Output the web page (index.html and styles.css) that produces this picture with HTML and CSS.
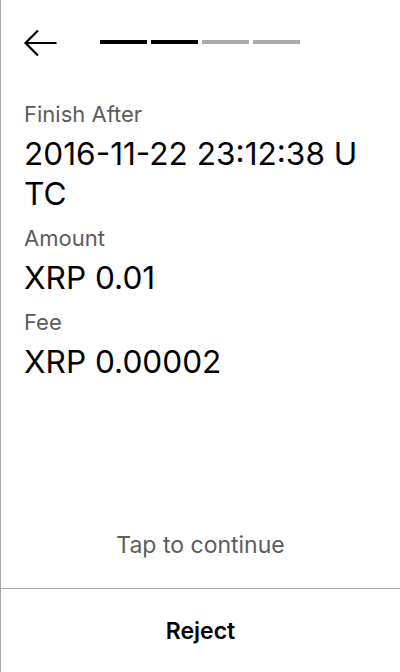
FILE: index.html
```html
<!DOCTYPE html>
<html>
<head>
<meta charset="utf-8">
<link rel="stylesheet" href="styles.css">
</head>
<body>
<div class="screen">
  <header class="header">
    <svg class="back" width="36" height="28" viewBox="0 0 36 28">
      <path d="M34.5 14 H3.5 M16 1.5 L3.5 14 L16 26.5" fill="none" stroke="#000" stroke-width="2.2"/>
    </svg>
    <div class="progress">
      <span class="seg on"></span><span class="seg on"></span><span class="seg"></span><span class="seg"></span>
    </div>
  </header>
  <main class="content">
    <div class="field">
      <div class="label">Finish After</div>
      <div class="value">2016-11-22 23:12:38 UTC</div>
    </div>
    <div class="field">
      <div class="label">Amount</div>
      <div class="value">XRP 0.01</div>
    </div>
    <div class="field">
      <div class="label">Fee</div>
      <div class="value">XRP 0.00002</div>
    </div>
  </main>
  <div class="tap">Tap to continue</div>
  <footer class="footer">
    <div class="reject">Reject</div>
  </footer>
</div>
</body>
</html>
```
FILE: styles.css
```css
html, body {
  margin: 0;
  padding: 0;
  background: #fff;
}
body {
  font-family: Inter, "Noto Sans", sans-serif;
  color: #000;
}
.screen {
  width: 400px;
  height: 672px;
  box-sizing: border-box;
  border-left: 1px solid #a8a8a8;
  display: flex;
  flex-direction: column;
}
.header {
  display: flex;
  align-items: center;
  height: 86px;
  padding-left: 21px;
}
.back {
  display: block;
  margin-right: 42px;
}
.progress {
  display: flex;
  gap: 4px;
  margin-top: -2px;
}
.seg {
  width: 47px;
  height: 4px;
  background: #aaaaaa;
}
.seg.on {
  background: #000;
}
.content {
  padding: 14px 28px 0 23px;
  flex: 1;
}
.label {
  font-size: 22px;
  line-height: 28px;
  color: #5c5c5c;
  margin-bottom: 6px;
}
.value {
  font-size: 31.6px;
  line-height: 40px;
  word-break: break-all;
  margin-bottom: 10px;
}
.tap {
  text-align: center;
  font-size: 23px;
  line-height: 28px;
  color: #5c5c5c;
  padding-bottom: 29px;
}
.footer {
  border-top: 1px solid #a8a8a8;
  height: 83px;
  display: flex;
  align-items: center;
  justify-content: center;
}
.reject {
  font-size: 23px;
  font-weight: 600;
}
```
